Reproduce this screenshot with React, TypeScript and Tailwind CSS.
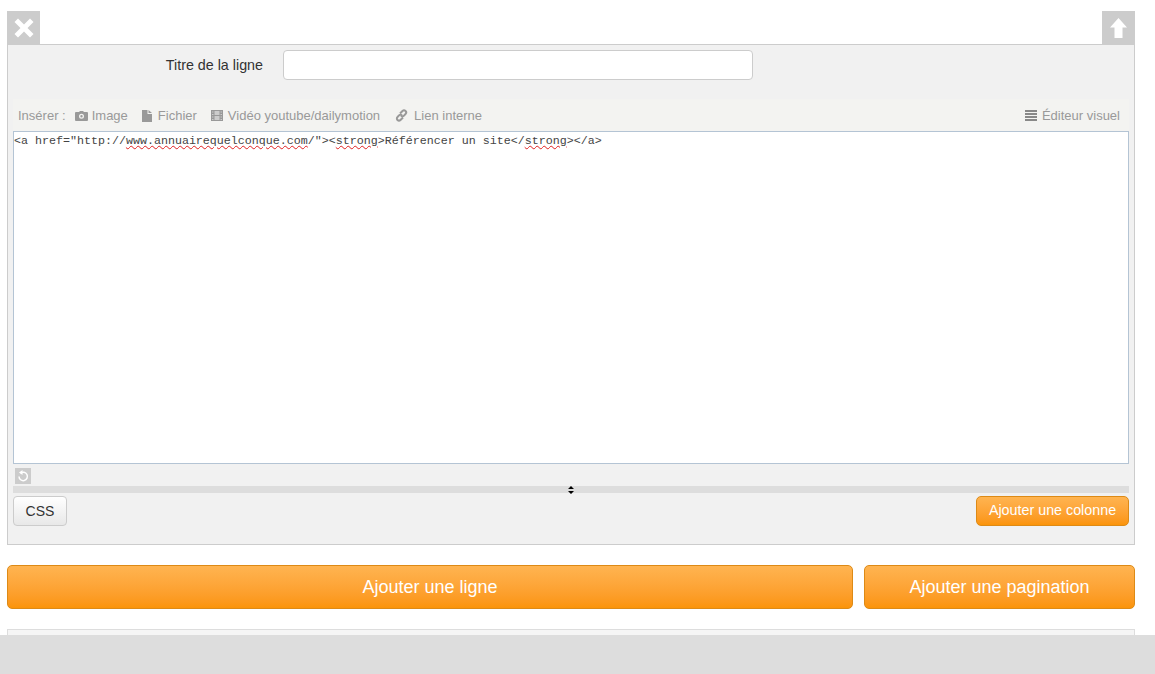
const orangeButton =
  'rounded-[5px] border border-[#dd8a16] bg-gradient-to-b from-[#ffb450] to-[#fb9407] text-white';

function Squiggle({ children }: { children: React.ReactNode }) {
  return <span className="underline decoration-wavy decoration-[#e02020] decoration-1 underline-offset-1">{children}</span>;
}

function CameraIcon() {
  return (
    <svg width="13" height="10" viewBox="0 0 13 10" className="mr-[4px]">
      <path fill="#999" fillRule="evenodd" d="M1 1h3l1-1h3l1 1h3a1 1 0 0 1 1 1v7a1 1 0 0 1-1 1H1a1 1 0 0 1-1-1V2a1 1 0 0 1 1-1zM6.500 2.700a2.500 2.500 0 1 0 0 5 2.500 2.500 0 0 0 0-5zM6.500 4a1.200 1.200 0 1 1 0 2.400 1.200 1.200 0 0 1 0-2.400z" />
    </svg>
  );
}

function FileIcon() {
  return (
    <svg width="10" height="12" viewBox="0 0 10 12" className="mr-[6px]">
      <path fill="#999" d="M0 0h5.500v4H10v8H0zM6.500 0 10 3H6.500z" />
    </svg>
  );
}

function FilmIcon() {
  return (
    <svg width="12" height="11" viewBox="0 0 12 11" className="mr-[5px]">
      <path fill="#999" d="M0 0h12v11H0z" />
      <path fill="#ccc" d="M1 1.500h1.500v1H1zM1 4h1.500v1H1zM1 6.500h1.500v1H1zM1 9h1.500v1H1zM9.500 1.500H11v1H9.500zM9.500 4H11v1H9.500zM9.500 6.500H11v1H9.500zM9.500 9H11v1H9.500zM3.500 1h5v4h-5zM3.500 6h5v4h-5z" />
    </svg>
  );
}

function LinkIcon() {
  return (
    <svg width="13" height="13" viewBox="0 0 13 13" fill="none" className="mr-[6px]">
      <path stroke="#999" strokeWidth="2" d="M5 4.500 7.500 2a2.100 2.100 0 0 1 3 3L9 6.600a2.100 2.100 0 0 1-3 0M8 8.500 5.500 11a2.100 2.100 0 0 1-3-3L4 6.400a2.100 2.100 0 0 1 3 0" />
    </svg>
  );
}

function ListIcon() {
  return (
    <svg width="12" height="11" viewBox="0 0 12 11" className="mr-[5px]">
      <path fill="#888" d="M0 0h12v2H0zM0 3h12v2H0zM0 6h12v2H0zM0 9h12v2H0z" />
    </svg>
  );
}

function ToolbarItem({ icon, label, className }: { icon: React.ReactNode; label: string; className?: string }) {
  return (
    <span className={`flex items-center ${className ?? ''}`}>
      {icon}
      {label}
    </span>
  );
}

export default function App() {
  return (
    <div className="relative h-[674px] overflow-hidden bg-white pl-[7px] pr-[20px] pt-[11px] font-['Liberation_Sans',Arial,sans-serif] text-[#333]">
      <div className="flex justify-between">
        <button className="flex h-[33px] w-[33px] items-center justify-center bg-[#ccc]">
          <svg width="20" height="20" viewBox="0 0 20 20">
            <path fill="#fff" d="M4 0.500 10 6.500 16 0.500 19.500 4 13.500 10 19.500 16 16 19.500 10 13.500 4 19.500 0.500 16 6.500 10 0.500 4z" />
          </svg>
        </button>
        <button className="flex h-[33px] w-[33px] items-center justify-center bg-[#ccc]">
          <svg width="17" height="20" viewBox="0 0 17 20">
            <path fill="#fff" d="M8.500 0 17 9.500H12.500V20H4.500V9.500H0z" />
          </svg>
        </button>
      </div>

      <div className="h-[501px] border border-[#ccc] bg-[#f1f1f1] px-[5px]">
        <div className="flex h-[54px] items-start pt-[5px]">
          <label className="mr-[20px] w-[250px] pt-[6px] text-right text-[14.3px] leading-[18px] text-[#333]">Titre de la ligne</label>
          <input className="h-[30px] w-[470px] rounded-[4px] border border-[#ccc] bg-white" />
        </div>

        <div className="flex h-[32px] items-center justify-between bg-[#f3f3f1] pl-[5px] pr-[9px] pt-[1px] text-[13px] text-[#999]">
          <div className="flex items-center">
            <span className="mr-[9px]">Insérer :</span>
            <ToolbarItem icon={<CameraIcon />} label="Image" className="mr-[14px]" />
            <ToolbarItem icon={<FileIcon />} label="Fichier" className="mr-[14px]" />
            <ToolbarItem icon={<FilmIcon />} label="Vidéo youtube/dailymotion" className="mr-[15px]" />
            <ToolbarItem icon={<LinkIcon />} label="Lien interne" />
          </div>
          <ToolbarItem icon={<ListIcon />} label="Éditeur visuel" />
        </div>

        <div className="h-[333px] border border-[#b4c4d4] bg-white pt-[1px] font-['Liberation_Mono',monospace] text-[11.67px] leading-[17px] text-[#444]">
          {'<a href="http://'}
          <Squiggle>www.annuairequelconque.com</Squiggle>
          {'/"><'}
          <Squiggle>strong</Squiggle>
          {'>Référencer un site</'}
          <Squiggle>strong</Squiggle>
          {'></a>'}
        </div>

        <div className="pl-[2px] pt-[4px]">
          <div className="flex h-[16px] w-[16px] items-center justify-center bg-[#ccc]">
            <svg width="12" height="12" viewBox="0 0 12 12" fill="none">
              <path stroke="#fff" strokeWidth="1.500" d="M3.500 3.200A4.200 4.200 0 1 1 2 6.500" />
              <path fill="#fff" d="M5.500 0v5L2 2.500z" />
            </svg>
          </div>
        </div>

        <div className="mt-[2px] flex h-[7px] items-center justify-center bg-[#ddd]">
          <svg width="6" height="8" viewBox="0 0 6 8">
            <path fill="#000" d="M3 0 6 3H0zM0 5h6L3 8z" />
          </svg>
        </div>

        <div className="mt-[3px] flex justify-between">
          <button className="h-[30px] w-[54px] rounded-[4px] border border-[#ccc] bg-gradient-to-b from-[#fff] to-[#e8e8e8] text-[14px] text-[#333]">CSS</button>
          <button className={`h-[30px] w-[153px] text-[14.3px] ${orangeButton}`}>Ajouter une colonne</button>
        </div>
      </div>

      <div className="mt-[20px] flex gap-[11px]">
        <button className={`h-[44px] w-[846px] text-[18px] ${orangeButton}`}>Ajouter une ligne</button>
        <button className={`h-[44px] w-[271px] text-[18px] ${orangeButton}`}>Ajouter une pagination</button>
      </div>

      <div className="mt-[20px] h-[60px] border border-[#ddd] bg-[#f5f5f5]" />

      <div className="absolute inset-x-0 bottom-0 h-[39px] bg-[#ddd]" />
    </div>
  );
}
